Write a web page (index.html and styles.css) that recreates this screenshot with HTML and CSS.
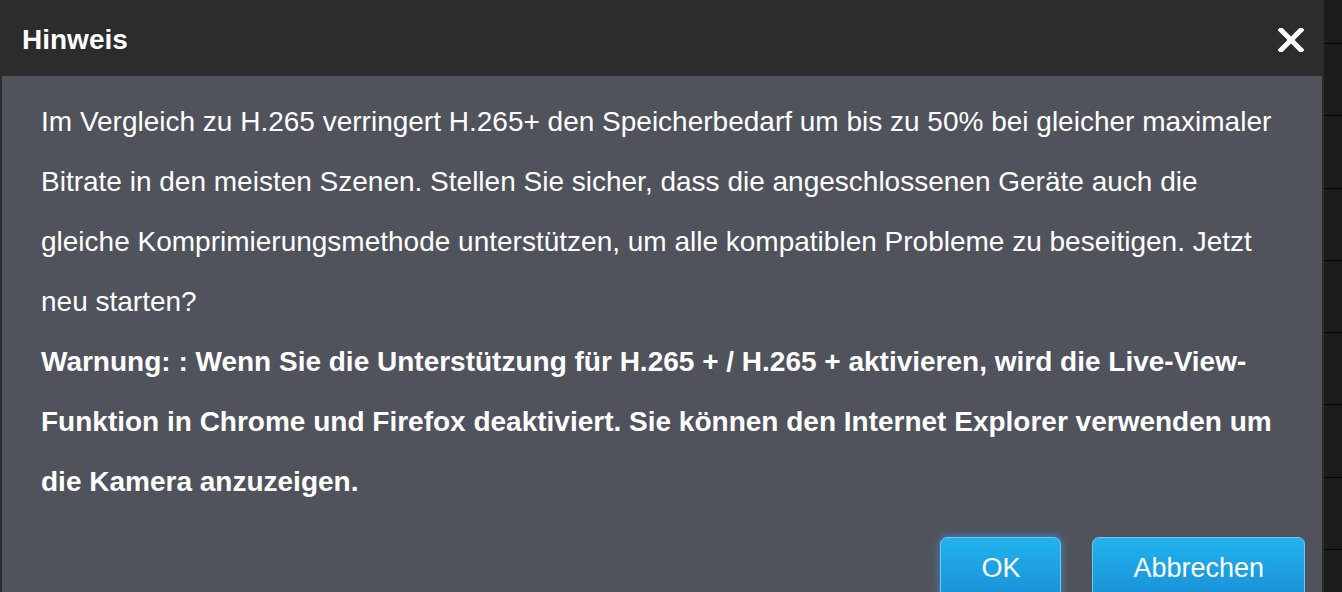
FILE: index.html
```html
<!DOCTYPE html>
<html lang="de">
<head>
    <meta charset="UTF-8">
    <meta name="viewport" content="width=device-width, initial-scale=1.0">
    <title>Hinweis</title>
    <link rel="stylesheet" href="styles.css">
</head>
<body>
    <div class="page">
        <div class="dialog">
            <div class="dialog-header">
                <h2>Hinweis</h2>
                <button class="close" type="button" aria-label="Schließen">
                    <svg width="26" height="24" viewBox="0 0 26 24">
                        <path d="M3 2 L23 22 M23 2 L3 22" stroke="#fff" stroke-width="5" stroke-linecap="square" fill="none"/>
                    </svg>
                </button>
            </div>
            <div class="dialog-body">
                <p>Im Vergleich zu H.265 verringert H.265+ den Speicherbedarf um bis zu 50% bei gleicher maximaler Bitrate in den meisten Szenen. Stellen Sie sicher, dass die angeschlossenen Geräte auch die gleiche Komprimierungsmethode unterstützen, um alle kompatiblen Probleme zu beseitigen. Jetzt neu starten?</p>
                <p class="warning">Warnung: : Wenn Sie die Unterstützung für H.265 + / H.265 + aktivieren, wird die Live-View-Funktion in Chrome und Firefox deaktiviert. Sie können den Internet Explorer verwenden um die Kamera anzuzeigen.</p>
                <div class="actions">
                    <button type="button" class="btn focused">OK</button>
                    <button type="button" class="btn">Abbrechen</button>
                </div>
            </div>
        </div>
        <div class="backdrop">
            <div class="row first"></div>
            <div class="row"></div>
            <div class="row"></div>
            <div class="row"></div>
            <div class="row"></div>
            <div class="row"></div>
            <div class="row"></div>
            <div class="row"></div>
        </div>
    </div>
</body>
</html>
```
FILE: styles.css
```css
body {
    margin: 0;
    padding: 0;
    font-family: "Liberation Sans", Arial, sans-serif;
    background-color: #1c1c1e;
    overflow: hidden;
}
.page {
    display: flex;
    height: 592px;
    overflow: hidden;
}
.dialog {
    width: 1324px;
    flex-shrink: 0;
    display: flex;
    flex-direction: column;
    overflow: hidden;
    background-color: #2c2c2c;
}
.dialog-header {
    height: 76px;
    flex-shrink: 0;
    display: flex;
    align-items: center;
    justify-content: space-between;
    padding: 3px 20px 0 22px;
    box-sizing: border-box;
}
.dialog-header h2 {
    margin: 0;
    color: #fff;
    font-size: 28px;
    font-weight: bold;
}
.close {
    border: none;
    background: none;
    padding: 0;
    cursor: pointer;
    display: flex;
}
.dialog-body {
    flex: 1;
    margin: 0 2px;
    background-color: #50535b;
    padding: 16px 17px 0 39px;
}
.dialog-body p {
    margin: 0;
    padding-right: 19px;
    color: #fff;
    font-size: 28px;
    line-height: 60px;
}
.dialog-body .warning {
    font-weight: bold;
}
.actions {
    display: flex;
    justify-content: flex-end;
    gap: 31px;
    margin-top: 25px;
}
.btn {
    flex-shrink: 0;
    height: 63px;
    padding: 0 40px;
    font-family: "Liberation Sans", Arial, sans-serif;
    font-size: 27px;
    color: #fff;
    border: 1px solid #6cc9f2;
    border-radius: 7px;
    background: linear-gradient(#22b3ee, #1a8fd7);
    cursor: pointer;
}
.btn.focused {
    box-shadow: 0 0 8px rgba(70, 160, 255, 0.7);
}
.backdrop {
    flex: 1;
    display: flex;
    flex-direction: column;
}
.row {
    height: 72.3px;
    flex-shrink: 0;
    border-bottom: 1px solid #050505;
    box-sizing: border-box;
}
.row.first {
    height: 44px;
}
```
